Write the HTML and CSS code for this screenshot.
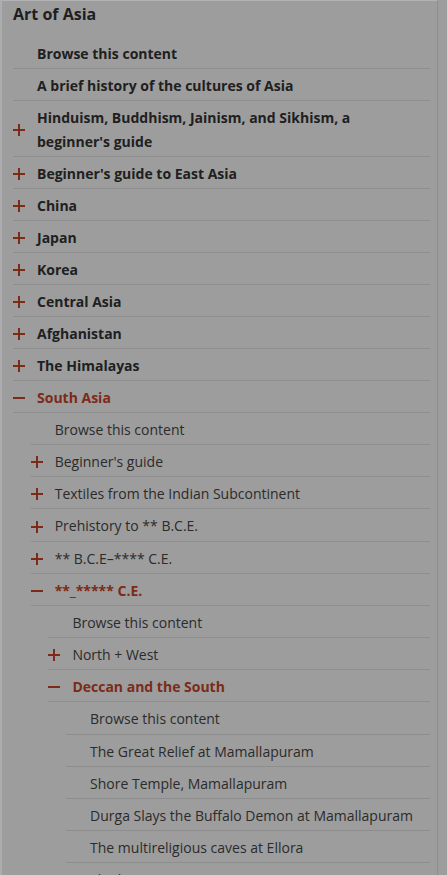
FILE: index.html
```html
<!DOCTYPE html>
<html lang="en">
<head>
<meta charset="utf-8">
<title>Art of Asia</title>
<link rel="stylesheet" href="styles.css">
</head>
<body>
<div class="panel">
  <h2 class="title">Art of Asia</h2>
  <ul class="tree top">
    <li><div class="row"><span class="icon"></span><span class="label">Browse this content</span></div></li>
    <li><div class="row"><span class="icon"></span><span class="label">A brief history of the cultures of Asia</span></div></li>
    <li><div class="row"><span class="icon plus"></span><span class="label">Hinduism, Buddhism, Jainism, and Sikhism, a beginner's guide</span></div></li>
    <li><div class="row"><span class="icon plus"></span><span class="label">Beginner's guide to East Asia</span></div></li>
    <li><div class="row"><span class="icon plus"></span><span class="label">China</span></div></li>
    <li><div class="row"><span class="icon plus"></span><span class="label">Japan</span></div></li>
    <li><div class="row"><span class="icon plus"></span><span class="label">Korea</span></div></li>
    <li><div class="row"><span class="icon plus"></span><span class="label">Central Asia</span></div></li>
    <li><div class="row"><span class="icon plus"></span><span class="label">Afghanistan</span></div></li>
    <li><div class="row"><span class="icon plus"></span><span class="label">The Himalayas</span></div></li>
    <li>
      <div class="row open"><span class="icon minus"></span><span class="label">South Asia</span></div>
      <ul class="tree sub">
        <li><div class="row"><span class="icon"></span><span class="label">Browse this content</span></div></li>
        <li><div class="row"><span class="icon plus"></span><span class="label">Beginner's guide</span></div></li>
        <li><div class="row"><span class="icon plus"></span><span class="label">Textiles from the Indian Subcontinent</span></div></li>
        <li><div class="row"><span class="icon plus"></span><span class="label">Prehistory to ** B.C.E.</span></div></li>
        <li><div class="row"><span class="icon plus"></span><span class="label">** B.C.E–**** C.E.</span></div></li>
        <li>
          <div class="row open"><span class="icon minus"></span><span class="label">**_***** C.E.</span></div>
          <ul class="tree sub">
            <li><div class="row"><span class="icon"></span><span class="label">Browse this content</span></div></li>
            <li><div class="row"><span class="icon plus"></span><span class="label">North + West</span></div></li>
            <li>
              <div class="row open"><span class="icon minus"></span><span class="label">Deccan and the South</span></div>
              <ul class="tree sub">
                <li><div class="row"><span class="icon"></span><span class="label">Browse this content</span></div></li>
                <li><div class="row"><span class="icon"></span><span class="label">The Great Relief at Mamallapuram</span></div></li>
                <li><div class="row"><span class="icon"></span><span class="label">Shore Temple, Mamallapuram</span></div></li>
                <li><div class="row"><span class="icon"></span><span class="label">Durga Slays the Buffalo Demon at Mamallapuram</span></div></li>
                <li><div class="row"><span class="icon"></span><span class="label">The multireligious caves at Ellora</span></div></li>
                <li><div class="row"><span class="icon"></span><span class="label">Elephanta</span></div></li>
              </ul>
            </li>
          </ul>
        </li>
      </ul>
    </li>
  </ul>
</div>
</body>
</html>
```
FILE: styles.css
```css
html, body {
  margin: 0;
  padding: 0;
  background: #9d9d9d;
  height: 100%;
  overflow: hidden;
}

body {
  font-family: "Open Sans", "Liberation Sans", sans-serif;
  color: #262626;
}

.panel {
  width: 417px;
  min-height: 900px;
  border-top: 1px solid #b3b3b3;
  border-left: 2px solid #adadad;
  border-right: 1px solid #8f8f8f;
  padding: 0 7px 0 11px;
}

.title {
  margin: 0 0 11px;
  padding-top: 1px;
  font-size: 16px;
  line-height: 24px;
  font-weight: 700;
  color: #1f1f1f;
}

.tree {
  list-style: none;
  margin: 0;
  padding: 0;
}

.sub {
  margin-left: 17.7px;
}

.row {
  display: flex;
  align-items: center;
  padding: 5px 0 2px;
  border-bottom: 1px solid #8e8e8e;
  font-size: 14px;
  line-height: 24px;
  font-weight: 400;
  color: #2b2b2b;
}

.sub .row {
  line-height: 24.15px;
}

.top > li > .row {
  font-weight: 700;
  color: #202020;
}

.tree .row.open {
  font-weight: 700;
  color: #7b2b18;
}

.icon {
  flex: 0 0 24px;
  width: 24px;
  height: 12px;
  position: relative;
}

.icon.plus::before,
.icon.plus::after,
.icon.minus::before {
  content: "";
  position: absolute;
  background: #7b2b18;
}

.icon.plus::before,
.icon.minus::before {
  left: 0;
  top: 5px;
  width: 12px;
  height: 2px;
}

.icon.plus::after {
  left: 5px;
  top: 0;
  width: 2px;
  height: 12px;
}

.label {
  flex: 1 1 auto;
  min-width: 0;
  padding-right: 14px;
}
```
